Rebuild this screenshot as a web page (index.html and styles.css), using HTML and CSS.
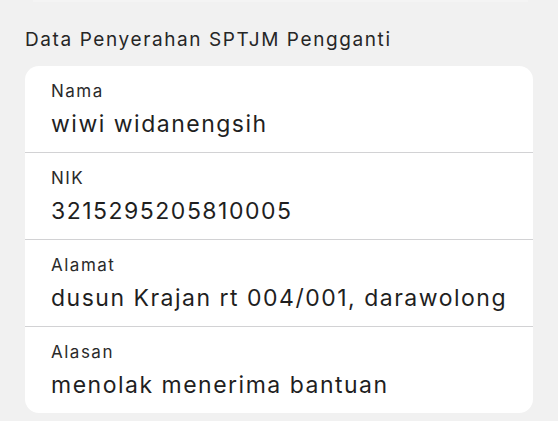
FILE: index.html
```html
<!DOCTYPE html>
<html lang="id">
<head>
<meta charset="utf-8">
<link rel="stylesheet" href="styles.css">
</head>
<body>
<div class="page">
  <div class="prev-edge"></div>
  <h2 class="section-title">Data Penyerahan SPTJM Pengganti</h2>
  <div class="card">
    <div class="row">
      <div class="label">Nama</div>
      <div class="value">wiwi widanengsih</div>
    </div>
    <div class="row">
      <div class="label">NIK</div>
      <div class="value">3215295205810005</div>
    </div>
    <div class="row">
      <div class="label">Alamat</div>
      <div class="value">dusun Krajan rt 004/001, darawolong</div>
    </div>
    <div class="row">
      <div class="label">Alasan</div>
      <div class="value">menolak menerima bantuan</div>
    </div>
  </div>
</div>
</body>
</html>
```
FILE: styles.css
```css
html, body {
  margin: 0;
  padding: 0;
  background: #f1f1f1;
}
body {
  font-family: Inter, "Noto Sans", sans-serif;
  color: #222;
  width: 558px;
  height: 421px;
  overflow: hidden;
}
.page {
  padding: 0 25px;
}
.prev-edge {
  height: 2px;
  margin: 0 5px 0 8px;
  background: #f4f4f4;
}
.section-title {
  margin: 0 0 14px;
  padding-top: 26px;
  font-size: 19px;
  line-height: 24px;
  letter-spacing: 1.6px;
  font-weight: 400;
  color: #262626;
}
.card {
  background: #fff;
  border-radius: 14px;
  overflow: hidden;
}
.row {
  height: 87px;
  box-sizing: border-box;
  padding: 14px 26px 0;
  border-bottom: 1px solid #d2d2d4;
}
.row:last-child {
  border-bottom: none;
  height: 86px;
}
.label {
  font-size: 17px;
  line-height: 22px;
  letter-spacing: 1.5px;
  color: #2a2a2a;
}
.value {
  margin-top: 7px;
  font-size: 23px;
  line-height: 30px;
  letter-spacing: 1.5px;
  color: #1f1f1f;
  white-space: nowrap;
}
```
